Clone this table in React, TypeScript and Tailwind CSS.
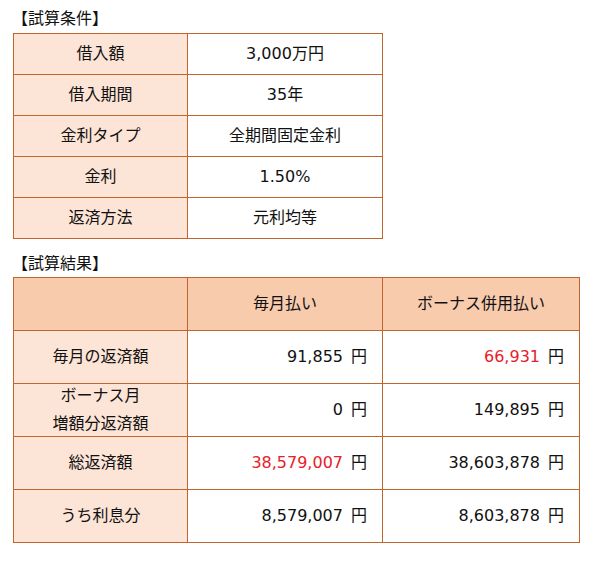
import React from "react";

const font = {
  fontFamily: '"DejaVu Sans", "Noto Sans CJK JP", sans-serif',
};

const conditions = [
  ["借入額", "3,000万円"],
  ["借入期間", "35年"],
  ["金利タイプ", "全期間固定金利"],
  ["金利", "1.50%"],
  ["返済方法", "元利均等"],
];

type Amount = { value: string; red?: boolean };

const results: { label: React.ReactNode; monthly: Amount; bonus: Amount }[] = [
  { label: "毎月の返済額", monthly: { value: "91,855" }, bonus: { value: "66,931", red: true } },
  {
    label: (
      <span className="leading-[28px]">
        ボーナス月
        <br />
        増額分返済額
      </span>
    ),
    monthly: { value: "0" },
    bonus: { value: "149,895" },
  },
  { label: "総返済額", monthly: { value: "38,579,007", red: true }, bonus: { value: "38,603,878" } },
  { label: "うち利息分", monthly: { value: "8,579,007" }, bonus: { value: "8,603,878" } },
];

const Yen = ({ a }: { a: Amount }) => (
  <div className="bg-white flex items-center justify-end pr-[15px]">
    <span className={a.red ? "text-[#e8202a]" : ""}>{a.value}</span>
    <span className="ml-[8px]">円</span>
  </div>
);

export default function App() {
  return (
    <div className="bg-white min-h-screen pt-[5px] px-[13px] text-[16px] text-[#111]" style={font}>
      {/* 試算条件 */}
      <div className="h-[28px] flex items-center -ml-[1px]">【試算条件】</div>
      <div className="grid grid-cols-[173px_194px] auto-rows-[40px] gap-px bg-[#c0652b] p-px w-fit">
        {conditions.map(([k, v]) => (
          <React.Fragment key={k}>
            <div className="bg-[#fce4d6] flex items-center justify-center">{k}</div>
            <div className="bg-white flex items-center justify-center">{v}</div>
          </React.Fragment>
        ))}
      </div>

      {/* 試算結果 */}
      <div className="mt-[11px] h-[27px] flex items-center -ml-[1px]">【試算結果】</div>
      <div className="grid grid-cols-[173px_194px_196px] auto-rows-[52px] gap-px bg-[#c0652b] p-px w-fit">
        <div className="bg-[#f8cbad]" />
        <div className="bg-[#f8cbad] flex items-center justify-center">毎月払い</div>
        <div className="bg-[#f8cbad] flex items-center justify-center">ボーナス併用払い</div>
        {results.map((r, i) => (
          <React.Fragment key={i}>
            <div className="bg-[#fce4d6] flex items-center justify-center text-center">{r.label}</div>
            <Yen a={r.monthly} />
            <Yen a={r.bonus} />
          </React.Fragment>
        ))}
      </div>
    </div>
  );
}
